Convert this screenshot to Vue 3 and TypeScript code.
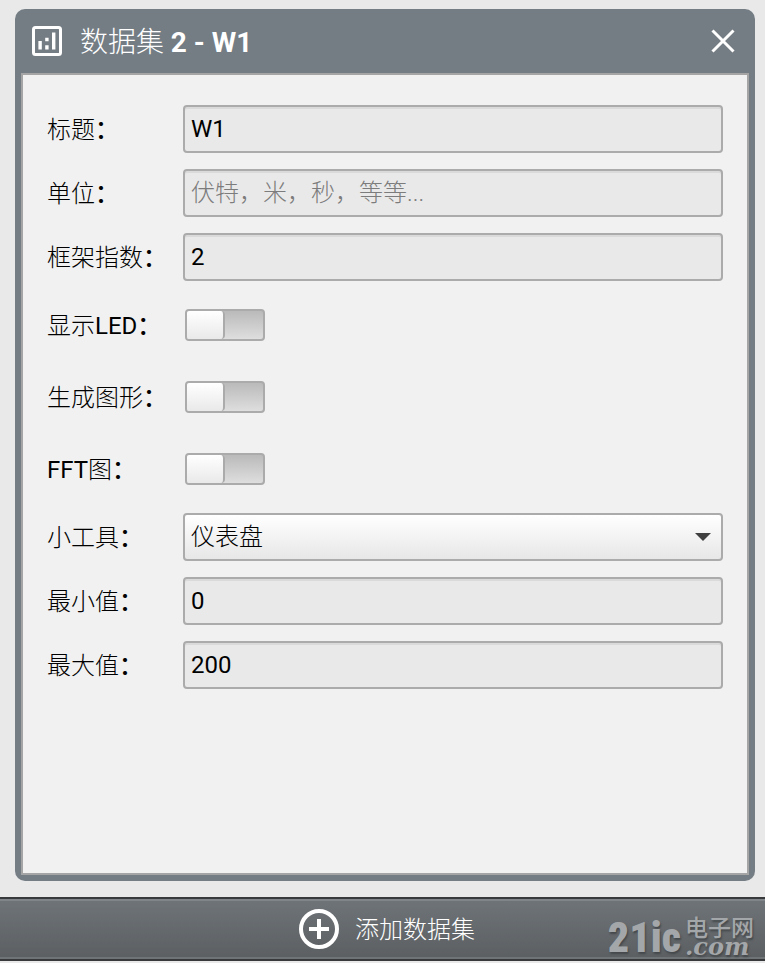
<script setup lang="ts">
import { reactive } from 'vue'

interface Dataset {
  title: string
  units: string
  frameIndex: string
  led: boolean
  graph: boolean
  fft: boolean
  widget: string
  min: string
  max: string
}

const dataset = reactive<Dataset>({
  title: 'W1',
  units: '',
  frameIndex: '2',
  led: false,
  graph: false,
  fft: false,
  widget: 'gauge',
  min: '0',
  max: '200',
})
</script>

<template>
  <div class="page">
    <main class="card">
      <header class="card-header">
        <svg class="chart-icon" viewBox="0 0 30 30" aria-hidden="true">
          <rect x="1.5" y="1.5" width="27" height="27" rx="2" fill="none" stroke="#fff" stroke-width="3" />
          <path d="M6.4 15h3.4v8.4H6.4zM13.2 11.8h3.4v3.4h-3.4zM13.2 19.2h3.4v4.2h-3.4zM20 6.4h3.4v17H20z" fill="#fff" />
        </svg>
        <h1>数据集 <b>2 - {{ dataset.title }}</b></h1>
        <button class="close" type="button" aria-label="关闭">
          <svg viewBox="0 0 24 24" aria-hidden="true">
            <path d="M1.5 1.5l21 21M22.5 1.5l-21 21" fill="none" stroke="#fff" stroke-width="3" />
          </svg>
        </button>
      </header>

      <form class="form" @submit.prevent>
        <div class="row">
          <label for="title">标题<span class="colon">：</span></label>
          <input id="title" v-model="dataset.title" class="field" type="text" />
        </div>
        <div class="row">
          <label for="units">单位<span class="colon">：</span></label>
          <input id="units" v-model="dataset.units" class="field" type="text" placeholder="伏特，米，秒，等等..." />
        </div>
        <div class="row">
          <label for="frame">框架指数<span class="colon">：</span></label>
          <input id="frame" v-model="dataset.frameIndex" class="field" type="text" />
        </div>
        <div class="row tall">
          <label for="led">显示<span class="latin">LED</span><span class="colon">：</span></label>
          <input id="led" v-model="dataset.led" class="switch" type="checkbox" role="switch" />
        </div>
        <div class="row tall">
          <label for="graph">生成图形<span class="colon">：</span></label>
          <input id="graph" v-model="dataset.graph" class="switch" type="checkbox" role="switch" />
        </div>
        <div class="row tall">
          <label for="fft"><span class="latin">FFT</span>图<span class="colon">：</span></label>
          <input id="fft" v-model="dataset.fft" class="switch" type="checkbox" role="switch" />
        </div>
        <div class="row">
          <label for="widget">小工具<span class="colon">：</span></label>
          <div class="select-wrap">
            <select id="widget" v-model="dataset.widget" class="field">
              <option value="gauge">仪表盘</option>
            </select>
            <svg class="arrow" viewBox="0 0 16 8" aria-hidden="true">
              <path d="M0 0h16L8 8z" fill="#404040" />
            </svg>
          </div>
        </div>
        <div class="row">
          <label for="min">最小值<span class="colon">：</span></label>
          <input id="min" v-model="dataset.min" class="field" type="text" />
        </div>
        <div class="row">
          <label for="max">最大值<span class="colon">：</span></label>
          <input id="max" v-model="dataset.max" class="field" type="text" />
        </div>
      </form>
    </main>

    <footer class="toolbar">
      <button class="add" type="button">
        <svg viewBox="0 0 40 40" aria-hidden="true">
          <circle cx="20" cy="20" r="18" fill="none" stroke="#fff" stroke-width="4" />
          <path d="M10 20h20M20 10v20" fill="none" stroke="#fff" stroke-width="4" />
        </svg>
        <span>添加数据集</span>
      </button>
      <div class="watermark">
        <span class="mark-main">21ic</span>
        <span class="mark-side">
          <span class="mark-cn">电子网</span>
          <span class="mark-com">.com</span>
        </span>
      </div>
    </footer>
  </div>
</template>

<style>
body {
  background: #e9e9e9;
}
</style>

<style scoped>
*,
*::before {
  box-sizing: border-box;
}

.page {
  display: flex;
  flex-direction: column;
  gap: 16px;
  min-height: 100vh;
  padding: 9px 0 2px;
  font-family: Roboto, "Noto Sans CJK SC", sans-serif;
  font-size: 24px;
  font-weight: 300;
  color: #000;
}

.card {
  display: flex;
  flex: 1;
  flex-direction: column;
  margin: 0 10px 0 15px;
  padding: 0 6px 6px;
  border-radius: 10px;
  background: #747d84;
}

.card-header {
  display: flex;
  align-items: center;
  gap: 18px;
  height: 64px;
  padding: 0 14px 0 11px;
  color: #fff;
}

.chart-icon {
  width: 30px;
  height: 30px;
}

h1 {
  flex: 1;
  margin: 0;
  padding-top: 4px;
  font-size: 28px;
  line-height: 40px;
  font-weight: 300;
}

h1 b {
  font-weight: 700;
}

button {
  padding: 0;
  border: 0;
  background: none;
  color: inherit;
  font: inherit;
  cursor: pointer;
}

.close,
.close svg {
  display: block;
  width: 24px;
  height: 24px;
}

.form {
  display: flex;
  flex: 1;
  flex-direction: column;
  gap: 16px;
  padding: 30px 24px;
  border: 2px solid #a5a5a5;
  background: #f1f1f1;
}

.row {
  display: grid;
  grid-template-columns: 136px 1fr;
  align-items: center;
  height: 48px;
}

.row.tall {
  height: 56px;
}

label {
  padding-top: 2px;
  line-height: 32px;
  white-space: nowrap;
}

.latin {
  font-weight: 400;
}

.colon {
  font-weight: 500;
}

.field {
  display: block;
  width: 100%;
  height: 48px;
  padding: 0 6px;
  border: 2px solid #ababab;
  border-radius: 4px;
  outline: 0;
  background: #e9e9e9;
  box-shadow: inset 0 2px #dadada;
  color: #000;
  font: inherit;
  font-weight: 400;
}

.field::placeholder {
  color: #7c7c7c;
  font-weight: 300;
  opacity: 1;
}

.select-wrap {
  position: relative;
}

select.field {
  appearance: none;
  background: linear-gradient(#fff, #e7e7e7);
  box-shadow: none;
  font-weight: 300;
}

.arrow {
  position: absolute;
  top: 20px;
  right: 12px;
  width: 16px;
  height: 8px;
  pointer-events: none;
}

.switch {
  appearance: none;
  display: flex;
  width: 80px;
  height: 32px;
  margin: 0 2px;
  border: 2px solid #ababab;
  border-radius: 4px;
  background: linear-gradient(#bababa, #dedede);
}

.switch::before {
  content: "";
  width: 38px;
  border-right: 2px solid #ababab;
  border-radius: 2px 4px 4px 2px;
  background: linear-gradient(#fff, #e9e9e9);
}

.switch:checked {
  justify-content: flex-end;
}

.toolbar {
  position: relative;
  display: flex;
  justify-content: center;
  height: 64px;
  border: solid #37393b;
  border-width: 2px 0;
  background: linear-gradient(#6f7478, #5b5f62);
  box-shadow: inset 0 2px #7f8588, inset 0 -2px #6f7477;
  color: #fff;
}

.add {
  display: flex;
  align-items: center;
  gap: 16px;
  margin-left: 9px;
}

.add span {
  padding-bottom: 4px;
}

.add svg {
  width: 40px;
  height: 40px;
}

.watermark {
  position: absolute;
  right: 8px;
  bottom: 0;
  display: flex;
  gap: 4px;
  height: 44px;
  color: #a4a7a9;
  text-shadow: 1px 2px 2px #44484b;
  pointer-events: none;
}

.mark-main {
  font: 900 42px/46px "Roboto Condensed", Roboto, sans-serif;
}

.mark-side {
  display: flex;
  flex-direction: column;
  width: 72px;
}

.mark-cn {
  font: 500 23px/22px "Noto Sans CJK SC", sans-serif;
}

.mark-com {
  font: italic 700 24px/20px "DejaVu Serif", serif;
}
</style>
